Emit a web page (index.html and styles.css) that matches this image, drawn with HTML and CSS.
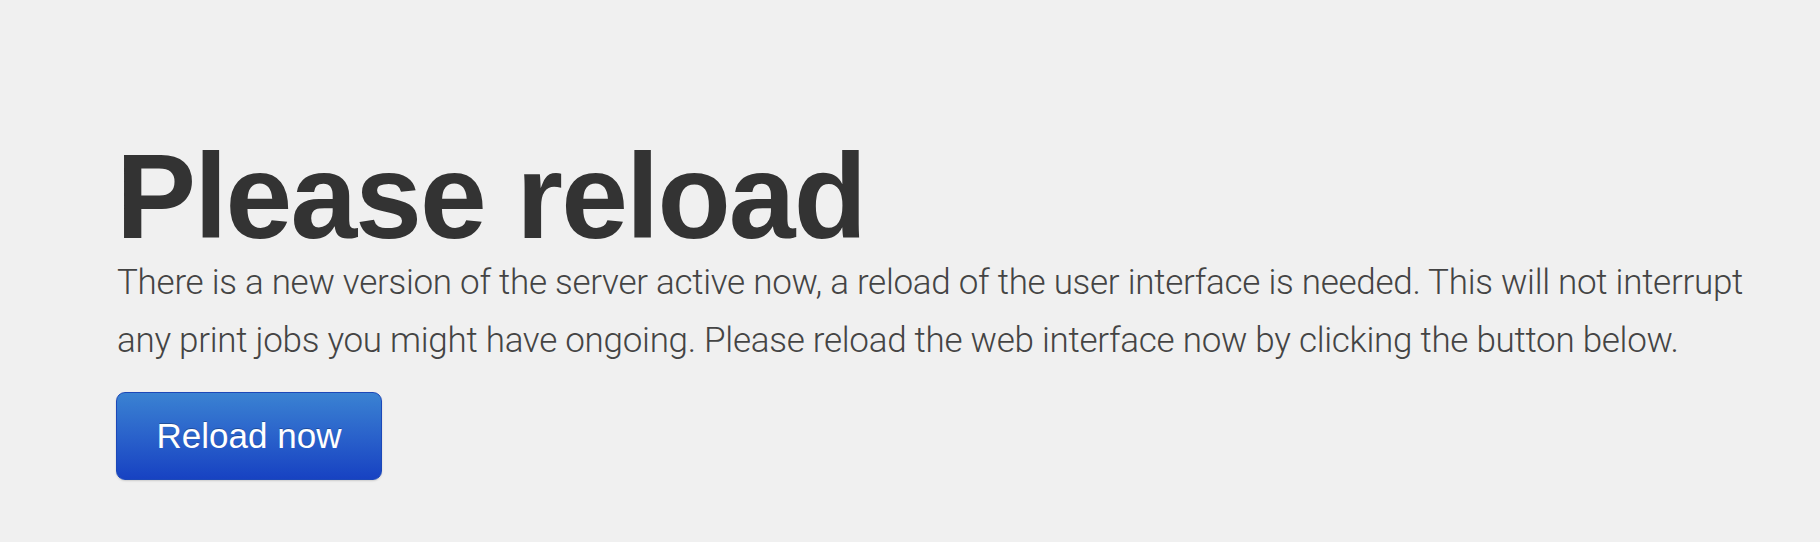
FILE: index.html
```html
<!DOCTYPE html>
<html lang="en">
<head>
<meta charset="utf-8">
<title>Please reload</title>
<link rel="stylesheet" href="styles.css">
</head>
<body>
<main class="hero">
  <h1 class="hero-title">Please reload</h1>
  <p class="hero-text">There is a new version of the server active now, a reload of the user interface is needed. This will not interrupt any print jobs you might have ongoing. Please reload the web interface now by clicking the button below.</p>
  <button class="btn-reload" type="button">Reload now</button>
</main>
</body>
</html>
```
FILE: styles.css
```css
html, body {
  margin: 0;
  padding: 0;
  background: #f0f0f0;
}
body {
  width: 1820px;
  height: 542px;
  overflow: hidden;
}
.hero {
  padding: 136px 0 0 116px;
  display: flex;
  flex-direction: column;
  align-items: flex-start;
}
.hero-title {
  margin: 0;
  font-family: "Liberation Sans", Arial, sans-serif;
  font-weight: 700;
  font-size: 120px;
  line-height: 120px;
  letter-spacing: -1.9px;
  color: #333333;
}
.hero-text {
  margin: -2px 0 0 1px;
  width: 1640px;
  font-family: Roboto, "Liberation Sans", sans-serif;
  font-weight: 300;
  font-size: 35px;
  line-height: 58px;
  letter-spacing: -0.28px;
  color: #444444;
}
.btn-reload {
  margin-top: 22px;
  width: 266px;
  height: 88px;
  border: 1px solid #1c48b8;
  border-radius: 9px;
  background: linear-gradient(to bottom, #3a82d2 0%, #2a62cb 50%, #1742c2 100%);
  box-shadow: 0 1px 2px rgba(0,0,0,0.15);
  font-family: "Liberation Sans", Arial, sans-serif;
  font-size: 35px;
  color: #ffffff;
  text-shadow: 0 -1px 0 rgba(0,0,0,0.25);
  padding: 0;
  cursor: pointer;
}
```
